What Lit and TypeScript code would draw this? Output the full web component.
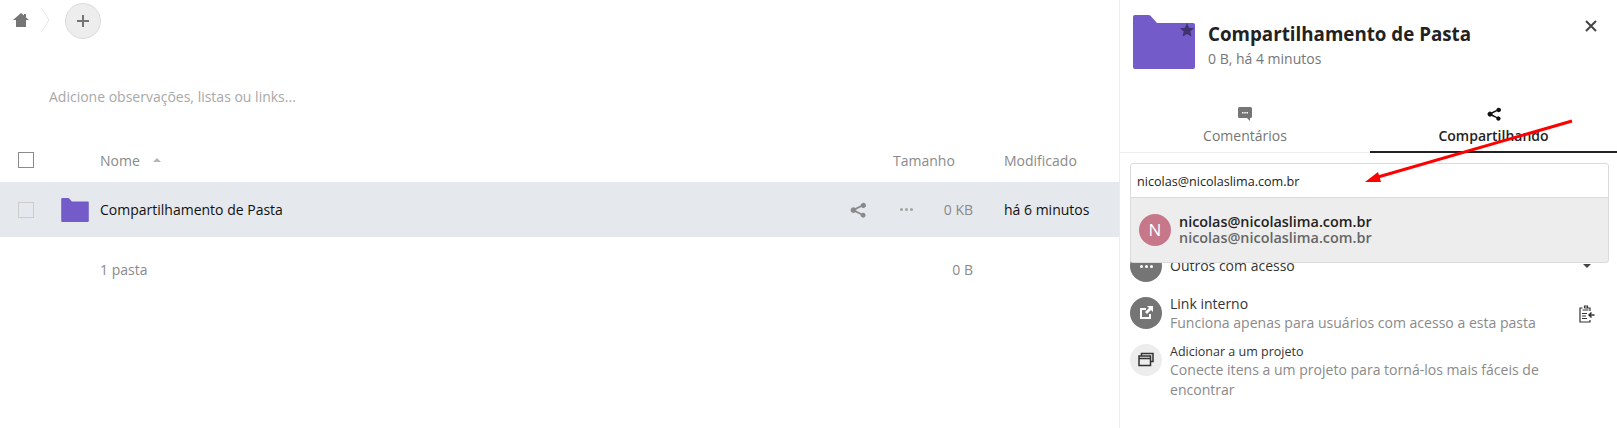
import { LitElement, html, css, svg } from "lit";
import { customElement } from "lit/decorators.js";

const folder = svg`<path d="M2 0h13.500a3 3 0 0 1 2 .8L24 8h36a2 2 0 0 1 2 2v42a2 2 0 0 1-2 2H2a2 2 0 0 1-2-2V2a2 2 0 0 1 2-2z" fill="#745bca"/>`;
const share = svg`<path d="M12.200 1.200a2.500 2.500 0 1 1-.8 3.700L6.300 7.500a2.700 2.700 0 0 1 0 1.200l5.100 2.600a2.500 2.500 0 1 1-.8 1.400L5.200 10.300a2.800 2.800 0 1 1 0-4.400l5.400-2.500a2.500 2.500 0 0 1 1.600-2.200z"/>`;

@customElement("app-root")
export class AppRoot extends LitElement {
  static styles = css`
    :host { display: flex; position: relative; width: 1617px; height: 428px; overflow: hidden; background: #fff;
      font-family: "Open Sans", "Noto Sans", sans-serif; font-size: 14px; color: #222; }
    svg { display: block; }
    .main { width: 1119px; flex: none; }
    .crumbs { height: 42px; display: flex; align-items: flex-start; }
    .home { margin: 13px 0 0 13px; fill: #757575; }
    .chev { margin: 8px 0 0 12px; }
    .add { margin: 3px 0 0 15px; width: 36px; height: 36px; box-sizing: border-box; border-radius: 50%; background: #ededed; border: 1px solid #dbdbdb; display: flex; align-items: center; justify-content: center; }
    .notes { margin: 45px 0 0 49px; height: 20px; line-height: 20px; color: #a8a8a8; }
    .row { display: flex; align-items: center; }
    .head { margin-top: 37px; height: 32px; color: #8a8a8a; }
    .check { width: 16px; height: 16px; box-sizing: border-box; margin-left: 18px; flex: none; }
    .head .check { border: 1px solid #8a8a8a; }
    .body .check { border: 1px solid #ccc; }
    .ficon { width: 28px; margin-left: 27px; flex: none; }
    .name { margin-left: 66px; flex: 1; display: flex; align-items: center; gap: 13px; }
    .body .name { margin-left: 11px; color: #111; }
    .size { width: 80px; text-align: right; flex: none; }
    .mod { width: 115px; margin-left: 31px; flex: none; }
    .head .size { width: 80px; margin: 0; text-align: left; }
    .head .mod { margin-left: 31px; }
    .body { margin-top: 6px; height: 55px; background: #e5e8ed; }
    .body .acts { display: flex; align-items: center; gap: 34px; fill: #8a8a8a; margin-right: 1px; }
    .body .size { color: #8a8a8a; width: 59px; }
    .body .mod { color: #111; }
    .dots { display: flex; gap: 2px; }
    .dots i { width: 3px; height: 3px; border-radius: 50%; background: #a3a3a3; }
    .foot { margin-top: 6px; height: 52px; padding-left: 100px; color: #8a8a8a; }
    .foot span:first-child { flex: 1; }
    .foot .size { width: 73px; margin-right: 146px; }

    .side { flex: 1; border-left: 1px solid #ededed; position: relative; }
    .top { display: flex; padding: 15px 0 0 13px; height: 107px; box-sizing: border-box; }
    .bigf { position: relative; width: 62px; height: 54px; flex: none; }
    .star { position: absolute; right: 0; top: 7px; }
    .titles { margin-left: 13px; margin-top: 7px; }
    .title { font-size: 18.75px; font-weight: 700; line-height: 24px; color: #222; }
    .sub { color: #767676; line-height: 20px; margin-top: 3px; }
    .close { position: absolute; top: 20px; right: 20px; }
    .tabs { display: flex; height: 45px; border-bottom: 1px solid #ededed; }
    .tab { display: flex; flex-direction: column; align-items: center; line-height: 18px; color: #767676; }
    .tab svg { margin: 0 0 6px; height: 14px; }
    .tab.on { color: #222; font-weight: 600; box-shadow: inset 0 -2px 0 #222; margin-bottom: -1px; }
    .l { flex: none; width: 250px; }
    .r { flex: 1; }
    .combo { position: relative; margin: 10px 8px 0 10px; height: 35px; box-sizing: border-box; border: 1px solid #dbdbdb; border-radius: 3px 3px 0 0; padding: 0 6px; line-height: 36px; font-size: 12.6px; color: #222; }
    .drop { position: absolute; z-index: 2; left: -1px; right: -1px; top: 33px; height: 66px; box-sizing: border-box; background: #ededed; border: 1px solid #dbdbdb; border-radius: 0 0 3px 3px; display: flex; align-items: center; padding-left: 8px; gap: 8px; font-weight: 600; line-height: 16px; font-size: 14.4px; }
    .ava { width: 32px; height: 32px; border-radius: 50%; background: #c6778a; color: #fff; display: flex; align-items: center; justify-content: center; font-size: 17px; font-weight: 400; flex: none; }
    .drop small { display: block; font-size: 14.4px; color: #666; }
    .item { display: flex; margin: 0 10px; gap: 9px; }
    .circ { width: 32px; height: 32px; border-radius: 50%; background: #757575; display: flex; align-items: center; justify-content: center; gap: 2px; flex: none; }
    .circ i { width: 3px; height: 3px; background: #fff; border-radius: 50%; }
    .circ.lt { background: #ededed; }
    .it { flex: 1; line-height: 16px; color: #333; margin-left: -1px; }
    .it small { display: block; font-size: 14.05px; color: #8a8a8a; line-height: 20px; }
    .outros { margin-top: 52px; align-items: center; }
    .caret { margin-right: 16px; }
    .clip { margin: 8px 12px 0 0; }
    .link { margin-top: 15px; }
    .link .it { margin-top: -1px; }
    .link .it small { margin-top: 1px; }
    .proj { margin-top: 11px; }
    .proj .it { margin-top: -1px; padding-right: 24px; }
    .proj .it > span { font-size: 12.5px; }
    .arrow { position: absolute; left: 0; top: 0; z-index: 5; pointer-events: none; }
  `;
  render() {
    return html`
      <div class="main">
        <div class="crumbs">
          <svg class="home" width="16" height="14" viewBox="0 0 16 14"><path d="M8 0l3 2.600V1h2v3.400L16 7h-3v7H3V7H0z"/></svg>
          <svg class="chev" width="9" height="24" viewBox="0 0 9 24"><path d="M.5 0L8 12 .5 24" fill="none" stroke="#e6e6e6"/></svg>
          <div class="add"><svg width="14" height="14" viewBox="0 0 14 14"><path d="M6 1h2v5h5v2H8v5H6V8H1V6h5z" fill="#757575"/></svg></div>
        </div>
        <div class="notes">Adicione observações, listas ou links...</div>
        <div class="row head">
          <div class="check"></div>
          <div class="name">Nome <svg width="8" height="4" viewBox="0 0 8 4"><path d="M4 0l4 4H0z" fill="#b5b5b5"/></svg></div>
          <div class="size">Tamanho</div>
          <div class="mod">Modificado</div>
        </div>
        <div class="row body">
          <div class="check"></div>
          <svg class="ficon" width="28" height="24" viewBox="0 0 62 54">${folder}</svg>
          <div class="name">Compartilhamento de Pasta</div>
          <div class="acts">
            <svg width="16" height="16" viewBox="0 0 16 16">${share}</svg>
            <div class="dots"><i></i><i></i><i></i></div>
          </div>
          <div class="size">0 KB</div>
          <div class="mod">há 6 minutos</div>
        </div>
        <div class="row foot"><span>1 pasta</span><span class="size">0 B</span></div>
      </div>
      <div class="side">
        <div class="top">
          <div class="bigf">
            <svg width="62" height="54" viewBox="0 0 62 54">${folder}</svg>
            <svg class="star" width="16" height="16" viewBox="0 0 16 16"><path d="M8 1l2.100 4.700 5 .5-3.800 3.300 1.100 5L8 12l-4.400 2.500 1.100-5L.9 6.200l5-.5z" fill="#3f3270"/></svg>
          </div>
          <div class="titles">
            <div class="title">Compartilhamento de Pasta</div>
            <div class="sub">0 B, há 4 minutos</div>
          </div>
          <svg class="close" width="12" height="12" viewBox="0 0 12 12"><path d="M1 1l10 10M11 1L1 11" stroke="#444" stroke-width="2"/></svg>
        </div>
        <div class="tabs">
          <div class="tab l">
            <svg width="14" height="14" viewBox="0 0 14 14"><path d="M1.500 0h11A1.500 1.500 0 0 1 14 1.500v8a1.500 1.500 0 0 1-1.500 1.500H12v3l-3-3H1.500A1.500 1.500 0 0 1 0 9.500v-8A1.500 1.500 0 0 1 1.500 0z" fill="#757575"/><path d="M4 5h1.500v1.500H4zM6.300 5h1.500v1.500H6.300zM8.500 5H10v1.500H8.500z" fill="#fff"/></svg>
            Comentários
          </div>
          <div class="tab r on">
            <svg width="14" height="14" viewBox="0 0 16 16" fill="#111">${share}</svg>
            Compartilhando
          </div>
        </div>
        <div class="combo">nicolas@nicolaslima.com.br
          <div class="drop">
            <div class="ava">N</div>
            <div>nicolas@nicolaslima.com.br<small>nicolas@nicolaslima.com.br</small></div>
          </div>
        </div>
        <div class="item outros">
          <div class="circ"><i></i><i></i><i></i></div>
          <div class="it">Outros com acesso</div>
          <svg class="caret" width="8" height="4" viewBox="0 0 8 4"><path d="M0 0h8L4 4z" fill="#444"/></svg>
        </div>
        <div class="item link">
          <div class="circ"><svg width="16" height="16" viewBox="0 0 16 16"><path d="M2 3h6v2H4v7h7V9h2v5H2z" fill="#fff"/><path d="M9 1h6v6l-2-2-4 4-2-2 4-4z" fill="#fff"/></svg></div>
          <div class="it">Link interno<small>Funciona apenas para usuários com acesso a esta pasta</small></div>
          <svg class="clip" width="16" height="18" viewBox="0 0 16 18"><path d="M5.500 3h3M3.500 3H1v14h10v-2M11 6V3H8.500M5.500 3V1h3v2M3.500 5h6M3 8.500h5M3 11h4M3 13.500h5" fill="none" stroke="#333" stroke-width="1.200"/><path d="M15.500 10H10M12.500 7.500L10 10l2.500 2.500" fill="none" stroke="#333" stroke-width="1.500"/></svg>
        </div>
        <div class="item proj">
          <div class="circ lt"><svg width="16" height="16" viewBox="0 0 16 16"><path d="M3.500 3.500V1.500h11.500v8H12M1 4h11.500v9.500H1zM1 6.500h11.500" fill="none" stroke="#333" stroke-width="1.500"/></svg></div>
          <div class="it"><span>Adicionar a um projeto</span><small>Conecte itens a um projeto para torná-los mais fáceis de encontrar</small></div>
        </div>
      </div>
      <svg class="arrow" width="1617" height="428" viewBox="0 0 1617 428">
        <path d="M1572 121L1378 177" stroke="#f00" stroke-width="3"/>
        <path d="M1365 182L1378 172L1381 182z" fill="#f00"/>
      </svg>
    `;
  }
}
